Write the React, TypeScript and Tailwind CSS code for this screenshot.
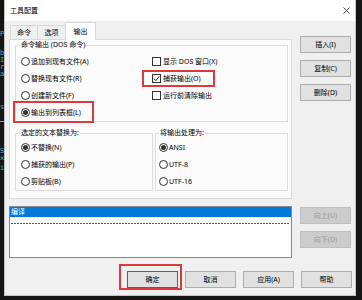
import React from "react";

function Radio({ label, checked }: { label: string; checked?: boolean }) {
  return (
    <div className="flex items-center h-[17px] gap-[1px]">
      <span className="w-[9px] h-[9px] rounded-full border border-[#333333] bg-white flex items-center justify-center shrink-0">
        {checked && <span className="w-[5px] h-[5px] rounded-full bg-[#333333]" />}
      </span>
      <span className="text-[7px] leading-[10px] text-black whitespace-nowrap">{label}</span>
    </div>
  );
}

function Check({ label, checked }: { label: string; checked?: boolean }) {
  return (
    <div className="flex items-center h-[17px] gap-[2px]">
      <span className="w-[9px] h-[9px] border border-[#333333] bg-white flex items-center justify-center shrink-0">
        {checked && (
          <svg width="7" height="7" viewBox="0 0 7 7">
            <path d="M0.8 3.6 L2.8 5.6 L6.2 1.4" stroke="#222" strokeWidth="1" fill="none" />
          </svg>
        )}
      </span>
      <span className="text-[7px] leading-[10px] text-black whitespace-nowrap">{label}</span>
    </div>
  );
}

function Btn({ label, disabled, primary }: { label: string; disabled?: boolean; primary?: boolean }) {
  const cls = disabled
    ? "bg-[#cccccc] border-[#bfbfbf] text-[#9a9a9a]"
    : primary
    ? "bg-[#e1e1e1] border-[#0078d7] text-black"
    : "bg-[#e1e1e1] border-[#adadad] text-black";
  return (
    <div className={"h-[17px] w-[51px] flex items-center justify-center text-[7px] leading-[10px] border " + cls}>
      {label}
    </div>
  );
}

function CodeStrip() {
  return (
    <div className="w-[4px] shrink-0 overflow-hidden flex flex-col font-['DejaVu_Sans_Mono',monospace] text-[7px] leading-[7px] text-[#3ab7c0]">
      <span className="mt-[31px]">P</span>
      <span className="mt-[12px]">b</span>
      <span>I</span>
      <span>r</span>
      <span>a</span>
      <span className="mt-[26px] text-[#5fb38a]">s</span>
      <span className="mt-[10px] h-[1px] bg-[#9a9a9a]" />
      <span className="mt-[26px]">S</span>
      <span>x</span>
      <span className="mt-[3px]">i</span>
    </div>
  );
}

export default function App() {
  return (
    <div className="w-[362px] h-[300px] bg-[#151515] flex overflow-hidden font-['Noto_Sans','Noto_Sans_CJK_SC',sans-serif]">
      <CodeStrip />
      <div className="w-[352px] h-[296px] shrink-0 flex flex-col bg-[#f0f0f0] border-x border-b border-[#c4c4c4]">
        {/* title bar */}
        <div className="h-[21px] bg-white flex items-center justify-between pl-[5px] pr-[5px] shrink-0">
          <span className="text-[7px] leading-[10px] text-black">工具配置</span>
          <svg width="7" height="7" viewBox="0 0 7 7">
            <path d="M0.5 0.5 L6.5 6.5 M6.5 0.5 L0.5 6.5" stroke="#333" strokeWidth="0.9" />
          </svg>
        </div>

        <div className="flex flex-col pl-[4px] pr-[3px]">
          {/* row A */}
          <div className="flex gap-[8px] mt-[1px]">
            <div className="w-[283px] flex flex-col">
              {/* tabs */}
              <div className="h-[17px] flex items-end pl-[1px] text-[7px] leading-[10px] text-black">
                <div className="w-[27px] h-[14px] border-t border-l border-[#d9d9d9] bg-[#f0f0f0] flex items-center justify-center">命令</div>
                <div className="w-[28px] h-[14px] border-t border-l border-[#d9d9d9] bg-[#f0f0f0] flex items-center justify-center">选项</div>
                <div className="w-[31px] h-[18px] -mb-[1px] relative z-10 border-t border-x border-[#d9d9d9] bg-white flex items-center justify-center pt-[1px]">输出</div>
              </div>
              {/* panel */}
              <div className="border border-[#d9d9d9] bg-[#fbfbfb] pl-[5px] pr-[3px] pb-[7px]">
                <fieldset className="border border-[#dcdcdc] pl-[4px] pr-[2px] pt-[3px] pb-0">
                  <legend className="px-[1px] text-[7px] leading-[10px] text-black">命令输出 (DOS 命令)</legend>
                  <div className="flex pl-[1px]">
                    <div className="w-[131px] flex flex-col">
                      <Radio label="追加到现有文件(A)" />
                      <Radio label="替换现有文件(R)" />
                      <Radio label="创建新文件(F)" />
                      <div className="relative">
                        <Radio label="输出到列表框(L)" checked />
                        <span className="absolute left-[-8px] top-[-3px] w-[81px] h-[22px] border-2 border-[#dc3a3f]" />
                      </div>
                    </div>
                    <div className="flex flex-col">
                      <Check label="显示 DOS 窗口(X)" />
                      <div className="relative">
                        <Check label="捕获输出(O)" checked />
                        <span className="absolute left-[-10px] top-[0px] w-[73px] h-[17px] border-2 border-[#dc3a3f]" />
                      </div>
                      <Check label="运行前清除输出" />
                    </div>
                  </div>
                </fieldset>
                <div className="flex gap-[2px] mt-[6px]">
                  <fieldset className="w-[138px] border border-[#dcdcdc] pl-[4px] pt-[1px] pb-0">
                    <legend className="px-[1px] text-[7px] leading-[10px] text-black">选定的文本替换为:</legend>
                    <div className="pl-[1px] flex flex-col">
                      <Radio label="不替换(N)" checked />
                      <Radio label="捕获的输出(P)" />
                      <Radio label="剪贴板(B)" />
                    </div>
                  </fieldset>
                  <fieldset className="flex-1 border border-[#dcdcdc] pl-[3px] pt-[1px] pb-0">
                    <legend className="px-[1px] text-[7px] leading-[10px] text-black">将输出处理为:</legend>
                    <div className="flex flex-col">
                      <Radio label="ANSI" checked />
                      <Radio label="UTF-8" />
                      <Radio label="UTF-16" />
                    </div>
                  </fieldset>
                </div>
              </div>
            </div>
            <div className="w-[51px] flex flex-col gap-[7px] pt-[14px]">
              <Btn label="插入(I)" />
              <Btn label="复制(C)" />
              <Btn label="删除(D)" />
            </div>
          </div>

          {/* row B */}
          <div className="flex gap-[8px] mt-[7px]">
            <div className="w-[283px] h-[52px] border border-[#828790] bg-white flex flex-col">
              <div className="h-[10px] bg-[#0078d7] text-white text-[7px] leading-[10px] pl-[1px]">编译</div>
              <div className="mt-[6px] mx-[1px] h-[1px] bg-[repeating-linear-gradient(90deg,#555555_0_2px,transparent_2px_3px)]" />
            </div>
            <div className="w-[51px] flex flex-col gap-[7px] pt-[1px]">
              <Btn label="向上(U)" disabled />
              <Btn label="向下(D)" disabled />
            </div>
          </div>

          {/* bottom buttons */}
          <div className="flex justify-end gap-[7px] mt-[13px]">
            <div className="relative">
              <Btn label="确定" primary />
              <span className="absolute left-[-8px] top-[-7px] w-[63px] h-[26px] border-2 border-[#dc3a3f]" />
            </div>
            <Btn label="取消" />
            <Btn label="应用(A)" />
            <Btn label="帮助" />
          </div>
        </div>
      </div>
    </div>
  );
}
